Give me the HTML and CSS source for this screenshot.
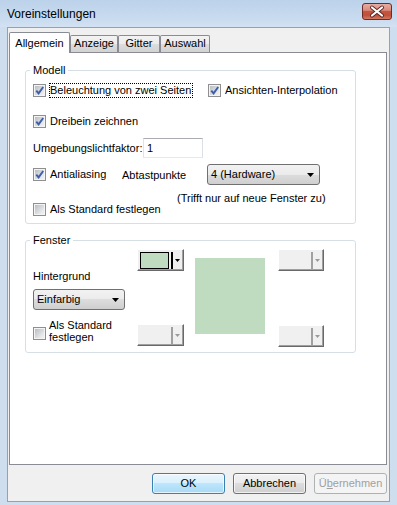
FILE: index.html
```html
<!DOCTYPE html>
<html lang="de">
<head>
    <meta charset="UTF-8" />
    <title>Voreinstellungen</title>
    <link rel="stylesheet" href="styles.css">
</head>
<body>
    <div class="window">
        <div class="titlebar">
            <span class="title">Voreinstellungen</span>
            <span class="close">
                <svg width="28" height="15" viewBox="0 0 28 15">
                    <path d="M9 3.5 L19 11.5 M19 3.5 L9 11.5" stroke="#5b2520" stroke-width="4" stroke-linecap="round" fill="none"/>
                    <path d="M9 3.5 L19 11.5 M19 3.5 L9 11.5" stroke="#fff" stroke-width="2.2" stroke-linecap="round" fill="none"/>
                </svg>
            </span>
        </div>

        <div class="frame">
            <div class="client">
                <div class="tabs">
                    <div class="tab active">Allgemein</div>
                    <div class="tab tab-anzeige">Anzeige</div>
                    <div class="tab tab-gitter">Gitter</div>
                    <div class="tab tab-auswahl">Auswahl</div>
                </div>

                <div class="panel">
                    <fieldset class="group group-model">
                        <legend>Modell</legend>

                        <div class="row row-1">
                            <label class="check check-wide">
                                <span class="box"><svg width="11" height="11" viewBox="0 0 11 11"><path d="M2.3 5.6 L4.6 8.4 L9.2 2" stroke="#3d5ea8" stroke-width="1.9" fill="none"/></svg></span>
                                <span class="focus">Beleuchtung von zwei Seiten</span>
                            </label>
                            <label class="check">
                                <span class="box"><svg width="11" height="11" viewBox="0 0 11 11"><path d="M2.3 5.6 L4.6 8.4 L9.2 2" stroke="#3d5ea8" stroke-width="1.9" fill="none"/></svg></span>
                                Ansichten-Interpolation
                            </label>
                        </div>

                        <div class="row row-2">
                            <label class="check">
                                <span class="box"><svg width="11" height="11" viewBox="0 0 11 11"><path d="M2.3 5.6 L4.6 8.4 L9.2 2" stroke="#3d5ea8" stroke-width="1.9" fill="none"/></svg></span>
                                Dreibein zeichnen
                            </label>
                        </div>

                        <div class="row row-3">
                            <span class="field-label">Umgebungslichtfaktor:</span>
                            <span class="field">1</span>
                        </div>

                        <div class="row row-4">
                            <label class="check check-aa">
                                <span class="box"><svg width="11" height="11" viewBox="0 0 11 11"><path d="M2.3 5.6 L4.6 8.4 L9.2 2" stroke="#3d5ea8" stroke-width="1.9" fill="none"/></svg></span>
                                Antialiasing
                            </label>
                            <span class="samples-label">Abtastpunkte</span>
                            <span class="combo combo-samples">
                                4 (Hardware)
                                <svg class="combo-arrow" width="7" height="4" viewBox="0 0 7 4"><path d="M0 0 H7 L3.5 4 Z" fill="#000"/></svg>
                            </span>
                        </div>

                        <div class="row row-5">(Trifft nur auf neue Fenster zu)</div>

                        <div class="row row-6">
                            <label class="check">
                                <span class="box"></span>
                                Als Standard festlegen
                            </label>
                        </div>
                    </fieldset>

                    <fieldset class="group group-window">
                        <legend>Fenster</legend>

                        <div class="window-body">
                            <div class="bg-col">
                                <span class="cbtn cbtn-color">
                                    <span class="swatch"></span>
                                    <span class="sep"></span>
                                    <svg width="5" height="3" viewBox="0 0 5 3"><path d="M0 0 H5 L2.5 3 Z" fill="#000"/></svg>
                                </span>

                                <div class="bg-label">Hintergrund</div>

                                <span class="combo combo-bg">
                                    Einfarbig
                                    <svg class="combo-arrow" width="7" height="4" viewBox="0 0 7 4"><path d="M0 0 H7 L3.5 4 Z" fill="#000"/></svg>
                                </span>

                                <div class="bg-bottom">
                                    <label class="check check-multi">
                                        <span class="box"></span>
                                        <span>Als Standard<br>festlegen</span>
                                    </label>
                                    <span class="cbtn off">
                                        <span class="sep"></span>
                                        <svg width="5" height="3" viewBox="0 0 5 3"><path d="M0 0 H5 L2.5 3 Z" fill="#9a9a9a"/></svg>
                                    </span>
                                </div>
                            </div>

                            <div class="preview"></div>

                            <div class="side-col">
                                <span class="cbtn off">
                                    <span class="sep"></span>
                                    <svg width="5" height="3" viewBox="0 0 5 3"><path d="M0 0 H5 L2.5 3 Z" fill="#9a9a9a"/></svg>
                                </span>
                                <span class="cbtn off">
                                    <span class="sep"></span>
                                    <svg width="5" height="3" viewBox="0 0 5 3"><path d="M0 0 H5 L2.5 3 Z" fill="#9a9a9a"/></svg>
                                </span>
                            </div>
                        </div>
                    </fieldset>
                </div>

                <div class="buttons">
                    <span class="btn default">OK</span>
                    <span class="btn">Abbrechen</span>
                    <span class="btn disabled">Ü<u>b</u>ernehmen</span>
                </div>
            </div>
        </div>
    </div>
</body>
</html>
```

FILE: styles.css
```css
body {
    margin: 0;
    font-family: "Liberation Sans", Arial, sans-serif;
    font-size: 11px;
    line-height: 13px;
    color: #000;
    background-color: #fff;
}

.window {
    width: 397px;
    height: 505px;
    display: flex;
    flex-direction: column;
    background-color: #c6d8ed;
}

/* Titelleiste */
.titlebar {
    height: 27px;
    flex: none;
    display: flex;
    align-items: center;
    padding-left: 7px;
    box-sizing: border-box;
    background: linear-gradient(#bcd2ea, #c9dbef 70%, #d3e2f3);
}

.title {
    font-size: 12px;
    margin-top: 1px;
}

.close {
    margin-left: auto;
    margin-right: 5px;
    margin-top: -4px;
    width: 30px;
    height: 17px;
    box-sizing: border-box;
    border: 1px solid #6e2b25;
    border-radius: 3px;
    background: linear-gradient(#e8aca2 0%, #d98b7d 42%, #c5553f 50%, #c0503b 75%, #d37a63 100%);
    display: flex;
}

.close svg {
    display: block;
}

.frame {
    flex: 1;
    display: flex;
    padding: 0 7px 3px 7px;
    background-color: #cfdeef;
}

.client {
    flex: 1;
    display: flex;
    flex-direction: column;
    border: 1px solid #8ea3ba;
    background-color: #f0f0f0;
    padding: 4px 2px 0 1px;
}

/* Reiter */
.tabs {
    display: flex;
    align-items: flex-end;
    height: 20px;
}

.tab {
    height: 17px;
    box-sizing: border-box;
    border: 1px solid #898c95;
    border-bottom: none;
    border-radius: 2px 2px 0 0;
    background: linear-gradient(#f3f3f3, #ebebeb 50%, #dddddd 50%, #d2d2d2);
    text-align: center;
    padding-top: 1px;
}

.tab.active {
    width: 61px;
    height: 21px;
    margin-bottom: -1px;
    position: relative;
    z-index: 1;
    background: #fff;
    padding-top: 4px;
}

.tab-anzeige {
    width: 48px;
}

.tab-gitter {
    width: 42px;
}

.tab-auswahl {
    width: 50px;
}

.panel {
    height: 413px;
    box-sizing: border-box;
    border: 1px solid #898c95;
    background-color: #fff;
}

/* Gruppen */
.group {
    margin: 0 0 0 15px;
    width: 331px;
    min-width: 0;
    box-sizing: border-box;
    border: 1px solid #d5dfe5;
    border-radius: 3px;
    padding: 0 6px 7px 7px;
}

.group legend {
    margin-left: -3px;
    padding: 0 3px;
    line-height: 13px;
}

.group-model {
    margin-top: 11px;
}

.group-window {
    margin-top: 10px;
    padding-top: 2px;
    padding-bottom: 5px;
}

.row {
    display: flex;
    align-items: center;
}

.row-1 {
    margin-top: 7px;
    height: 13px;
}

.row-2 {
    margin-top: 18px;
    height: 13px;
}

.row-3 {
    margin-top: 10px;
}

.row-4 {
    margin-top: 6px;
}

.row-5 {
    margin-top: 7px;
    padding-left: 144px;
}

.row-6 {
    height: 13px;
    margin-top: -2px;
}

/* Kontrollkästchen */
.check {
    display: flex;
    align-items: center;
    white-space: nowrap;
}

.box {
    flex: none;
    width: 13px;
    height: 13px;
    box-sizing: border-box;
    margin-right: 4px;
    border: 1px solid #8f8f8f;
    background: linear-gradient(135deg, #b3b7bd, #e6e8ea 70%, #f6f6f6);
    box-shadow: inset 0 0 0 1px #f4f4f4;
}

.box svg {
    display: block;
}

.check-wide {
    flex: 0 0 175px;
}

.focus {
    margin-left: -1px;
    border: 1px dotted #000;
    padding-right: 1px;
}

.check-aa {
    flex: 0 0 89px;
}

.samples-label {
    flex: 0 0 85px;
    margin-top: 2px;
}

.field-label {
    flex: 0 0 110px;
}

.field {
    width: 60px;
    height: 20px;
    box-sizing: border-box;
    border: 1px solid;
    border-color: #abadb3 #dbdfe6 #e3e9ef #e2e3ea;
    background-color: #fff;
    padding-left: 3px;
    line-height: 18px;
}

/* Auswahllisten */
.combo {
    display: flex;
    align-items: center;
    height: 21px;
    box-sizing: border-box;
    border: 1px solid #707070;
    border-radius: 3px;
    background: linear-gradient(#f2f2f2, #ebebeb 50%, #dddddd 50%, #cfcfcf);
    padding: 0 5px 0 3px;
}

.combo-arrow {
    margin-left: auto;
}

.combo-samples {
    width: 113px;
}

.combo-bg {
    width: 92px;
    margin-top: 6px;
}

/* Fenster */
.window-body {
    display: flex;
    align-items: flex-start;
}

.bg-col {
    width: 151px;
    display: flex;
    flex-direction: column;
}

.cbtn {
    display: flex;
    align-items: center;
    justify-content: flex-end;
    width: 47px;
    height: 22px;
    box-sizing: border-box;
    border: 1px solid;
    border-color: #fff #696969 #696969 #fff;
    box-shadow: inset -1px -1px 0 #a0a0a0;
    background-color: #f0f0f0;
    padding: 0 3px 0 2px;
}

.cbtn-color {
    align-self: flex-end;
}

.swatch {
    width: 29px;
    height: 17px;
    box-sizing: border-box;
    border: 1px solid #000;
    background-color: #c0dcc0;
    margin-right: auto;
}

.sep {
    width: 2px;
    height: 17px;
    background-color: #000;
    margin-right: 2px;
}

.cbtn.off .sep {
    background-color: #a0a0a0;
}

.cbtn svg {
    display: block;
}

.bg-label {
    margin-top: -1px;
}

.bg-bottom {
    display: flex;
    align-items: flex-start;
    margin-top: 9px;
}

.check-multi {
    align-items: flex-start;
    line-height: 12px;
}

.check-multi .box {
    margin-top: 8px;
    margin-right: 3px;
}

.bg-bottom .cbtn {
    margin-left: auto;
    margin-top: 5px;
}

.preview {
    width: 70px;
    height: 76px;
    margin: 9px 0 0 11px;
    background-color: #c0dcc0;
}

.side-col {
    width: 46px;
    height: 98px;
    margin-left: 13px;
    display: flex;
    flex-direction: column;
    justify-content: space-between;
}

.side-col .cbtn {
    width: 46px;
}

/* Schaltflächen */
.buttons {
    display: flex;
    justify-content: flex-end;
    gap: 8px;
    margin-top: 8px;
}

.btn {
    width: 73px;
    height: 21px;
    box-sizing: border-box;
    border: 1px solid #707070;
    border-radius: 3px;
    background: linear-gradient(#f2f2f2, #ebebeb 50%, #dddddd 50%, #cfcfcf);
    box-shadow: inset 0 0 0 1px rgba(255,255,255,0.7);
    text-align: center;
    line-height: 19px;
}

.btn.default {
    border-color: #3c7fb1;
    background: linear-gradient(#eaf6fd, #d9f0fc 50%, #bee6fd 50%, #a7d9f5);
}

.btn.disabled {
    border-color: #adb2b5;
    background: #f4f4f4;
    box-shadow: none;
    color: #a0a0a0;
}
```
